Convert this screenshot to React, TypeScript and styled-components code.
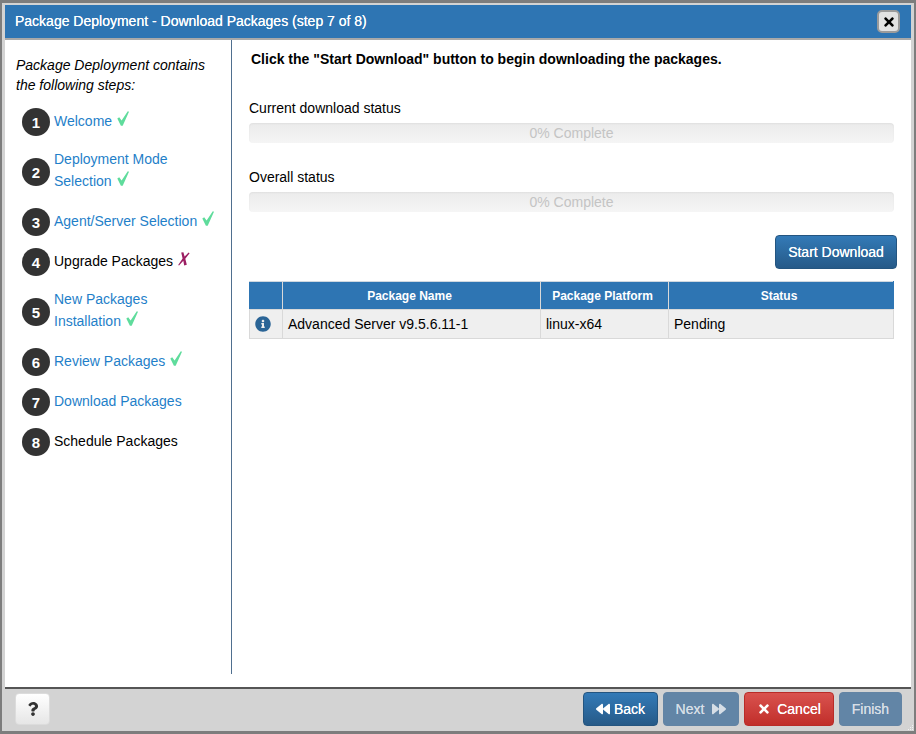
import React from 'react';
import styled, { createGlobalStyle } from 'styled-components';
import { FaBackward, FaForward, FaInfoCircle, FaQuestion, FaTimes } from 'react-icons/fa';

const GlobalStyle = createGlobalStyle`
    html, body {
        margin: 0;
        padding: 0;
        background: #fff;
    }
    * {
        box-sizing: border-box;
    }
`;

const Frame = styled.div`
    width: 916px;
    height: 734px;
    display: flex;
    flex-direction: column;
    position: relative;
    border: 3px solid #7d7d7d;
    border-left-width: 2px;
    border-right-width: 2px;
    padding: 2px 3px;
    background: #d3d3d3;
    font-family: "Liberation Sans", Arial, sans-serif;
    font-size: 14px;
    color: #000;
`;

const Header = styled.div`
    height: 35px;
    flex: none;
    display: flex;
    align-items: center;
    justify-content: space-between;
    padding: 0 11px 0 10px;
    background: #2e75b3;
    border-bottom: 2px solid #a9a9a9;
    color: #fff;
    font-size: 14px;
    text-shadow: 0 0 0.4px #fff;
`;

const Title = styled.span`
    margin-top: -2px;
`;

const CloseButton = styled.button`
    width: 23px;
    height: 23px;
    display: flex;
    align-items: center;
    justify-content: center;
    padding: 0;
    background: #e2e2e2;
    border: 2px solid #9b9b9b;
    border-radius: 5px;
    color: #000;
    font-size: 14px;
`;

const Body = styled.div`
    flex: 1;
    display: flex;
    min-height: 0;
    background: #fff;
`;

const Sidebar = styled.div`
    width: 227px;
    height: 634px;
    flex: none;
    padding: 15px 11px 0 11px;
    border-right: 1px solid #4f6f8f;
`;

const Intro = styled.div`
    font-style: italic;
    line-height: 20px;
`;

const Steps = styled.div`
    display: flex;
    flex-direction: column;
    gap: 12px;
    margin: 13px 0 0 6px;
`;

const Step = styled.div`
    display: flex;
    align-items: center;
    gap: 4px;
`;

const Bullet = styled.div`
    width: 28px;
    height: 28px;
    flex: none;
    display: flex;
    align-items: center;
    justify-content: center;
    border-radius: 50%;
    background: #333;
    color: #fff;
    font-weight: bold;
    font-size: 15px;
`;

const StepLabel = styled.div<{ $link: boolean; $wrapped: boolean }>`
    padding: ${props => (props.$wrapped ? '0 0 4px' : '1px 0 3px')};
    line-height: 22px;
    color: ${props => (props.$link ? '#1f7fc9' : '#000')};
`;

const MarkIcon = styled.svg`
    margin-left: 5px;
    vertical-align: baseline;
`;

const CheckMark = () => (
    <MarkIcon width="12" height="15" viewBox="0 0 12 15" fill="#5fdc9c">
        <path d="M0.3 7.6 L2.2 6.3 L4.6 9.6 L10.8 0.3 L12 0.8 L5.7 14.7 L3.9 14.7 Z" />
    </MarkIcon>
);

const CrossMark = () => (
    <MarkIcon width="12" height="14" viewBox="0 0 12 14" fill="#9c1f63">
        <path d="M3.2 0.4 L5.4 0.2 L6.6 4.6 L10.6 0.6 L11.6 1.2 L7.3 6.8 L8.8 12.8 L6.2 13.6 L5.3 8.8 L1 13.6 L0.2 13 L4.6 6.4 Z" />
    </MarkIcon>
);

const Main = styled.div`
    flex: 1;
    min-width: 0;
    padding: 9px 17px 0 17px;
`;

const Lead = styled.div`
    font-weight: bold;
    line-height: 20px;
    padding-left: 2px;
`;

const StatusLabel = styled.div`
    line-height: 20px;
`;

const StatusBlock = styled.div<{ $top: number }>`
    margin-top: ${props => props.$top}px;
    width: 645px;
`;

const Progress = styled.div`
    height: 20px;
    margin-top: 5px;
    border-radius: 4px;
    background: linear-gradient(#ebebeb, #f5f5f5);
    box-shadow: inset 0 1px 2px rgba(0, 0, 0, 0.05);
    text-align: center;
    line-height: 20px;
    color: #c4c4c4;
`;

const DownloadRow = styled.div`
    display: flex;
    justify-content: flex-end;
    margin: 23px -3px 0 0;
    height: 34px;
`;

const Button = styled.button<{ $kind: 'primary' | 'muted' | 'danger'; $width: number; $gap?: number }>`
    width: ${props => props.$width}px;
    height: 34px;
    display: flex;
    align-items: center;
    justify-content: center;
    gap: ${props => props.$gap ?? 4}px;
    padding: 0;
    font-family: inherit;
    font-size: 14px;
    color: ${props => (props.$kind === 'muted' ? '#d6dee6' : '#fff')};
    text-shadow: 0 0 0.5px currentColor;
    border-radius: 4px;
    border: 1px solid ${props =>
        props.$kind === 'danger' ? '#b92c28' : props.$kind === 'muted' ? '#6384a4' : '#245580'};
    background: ${props =>
        props.$kind === 'danger'
            ? 'linear-gradient(#d9534f, #c12e2a)'
            : props.$kind === 'muted'
            ? '#6285a6'
            : 'linear-gradient(#337ab7, #265a88)'};
    svg {
        font-size: 14px;
    }
`;

const Table = styled.table`
    width: 644px;
    margin-top: 12px;
    border-collapse: collapse;
    table-layout: fixed;
`;

const Th = styled.th`
    height: 28px;
    padding: 0 4px 0 0;
    background: #2e75b3;
    color: #fff;
    font-size: 12px;
    font-weight: bold;
    text-align: center;
    border: 1px solid #d9d9d9;
    border-top-color: #cfd8e0;
    &:first-child {
        border-left-color: #2e75b3;
    }
    &:last-child {
        border-right-color: #2e75b3;
    }
`;

const Td = styled.td`
    height: 29px;
    padding: 0 4px 0 5px;
    background: #efefef;
    border: 1px solid #d9d9d9;
`;

const InfoCell = styled(Td)`
    padding: 4px 0 0 5px;
    text-align: left;
    color: #2a6496;
    font-size: 16px;
`;

const Footer = styled.div`
    height: 42px;
    flex: none;
    display: flex;
    align-items: center;
    justify-content: space-between;
    padding: 0 9px 0 10px;
    background: #d3d3d3;
    border-top: 2px solid #555;
`;

const HelpButton = styled.button`
    width: 35px;
    height: 32px;
    display: flex;
    align-items: center;
    justify-content: center;
    padding: 0;
    border: 1px solid #dcdcdc;
    border-radius: 4px;
    background: linear-gradient(#fff, #e6e6e6);
    color: #333;
    font-size: 14px;
`;

const Actions = styled.div`
    display: flex;
    gap: 5px;
`;

const ResizeGrip = styled.svg`
    position: absolute;
    right: 0;
    bottom: 0;
`;

const steps = [
    { n: 1, label: 'Welcome', link: true, mark: 'ok' },
    { n: 2, label: 'Deployment Mode Selection', link: true, mark: 'ok', width: 130 },
    { n: 3, label: 'Agent/Server Selection', link: true, mark: 'ok' },
    { n: 4, label: 'Upgrade Packages', link: false, mark: 'fail' },
    { n: 5, label: 'New Packages Installation', link: true, mark: 'ok', width: 110 },
    { n: 6, label: 'Review Packages', link: true, mark: 'ok' },
    { n: 7, label: 'Download Packages', link: true },
    { n: 8, label: 'Schedule Packages', link: false },
];

export default function App() {
    return (
        <>
            <GlobalStyle />
            <Frame>
                <Header>
                    <Title>Package Deployment - Download Packages (step 7 of 8)</Title>
                    <CloseButton aria-label="Close">
                        <FaTimes />
                    </CloseButton>
                </Header>
                <Body>
                    <Sidebar>
                        <Intro>
                            Package Deployment contains
                            <br />
                            the following steps:
                        </Intro>
                        <Steps>
                            {steps.map(step => (
                                <Step key={step.n}>
                                    <Bullet>{step.n}</Bullet>
                                    <StepLabel $link={step.link} $wrapped={!!step.width} style={{ maxWidth: step.width }}>
                                        {step.label}
                                        {step.mark === 'ok' && <CheckMark />}
                                        {step.mark === 'fail' && <CrossMark />}
                                    </StepLabel>
                                </Step>
                            ))}
                        </Steps>
                    </Sidebar>
                    <Main>
                        <Lead>Click the "Start Download" button to begin downloading the packages.</Lead>
                        <StatusBlock $top={29}>
                            <StatusLabel>Current download status</StatusLabel>
                            <Progress>0% Complete</Progress>
                        </StatusBlock>
                        <StatusBlock $top={24}>
                            <StatusLabel>Overall status</StatusLabel>
                            <Progress>0% Complete</Progress>
                        </StatusBlock>
                        <DownloadRow>
                            <Button $kind="primary" $width={122}>Start Download</Button>
                        </DownloadRow>
                        <Table>
                            <colgroup>
                                <col width="33" />
                                <col width="258" />
                                <col width="128" />
                                <col width="225" />
                            </colgroup>
                            <thead>
                                <tr>
                                    <Th />
                                    <Th>Package Name</Th>
                                    <Th>Package Platform</Th>
                                    <Th>Status</Th>
                                </tr>
                            </thead>
                            <tbody>
                                <tr>
                                    <InfoCell>
                                        <FaInfoCircle />
                                    </InfoCell>
                                    <Td>Advanced Server v9.5.6.11-1</Td>
                                    <Td>linux-x64</Td>
                                    <Td>Pending</Td>
                                </tr>
                            </tbody>
                        </Table>
                    </Main>
                </Body>
                <Footer>
                    <HelpButton aria-label="Help">
                        <FaQuestion />
                    </HelpButton>
                    <Actions>
                        <Button $kind="primary" $width={75}>
                            <FaBackward /> Back
                        </Button>
                        <Button $kind="muted" $width={76} $gap={8}>
                            Next <FaForward />
                        </Button>
                        <Button $kind="danger" $width={90} $gap={6}>
                            <FaTimes /> Cancel
                        </Button>
                        <Button $kind="muted" $width={63}>Finish</Button>
                    </Actions>
                </Footer>
                <ResizeGrip width="7" height="7" viewBox="0 0 7 7" fill="#f2f2f2">
                    <rect x="5" y="1" width="1" height="1" />
                    <rect x="3" y="3" width="1" height="1" />
                    <rect x="5" y="3" width="1" height="1" />
                    <rect x="1" y="5" width="1" height="1" />
                    <rect x="3" y="5" width="1" height="1" />
                    <rect x="5" y="5" width="1" height="1" />
                </ResizeGrip>
            </Frame>
        </>
    );
}
